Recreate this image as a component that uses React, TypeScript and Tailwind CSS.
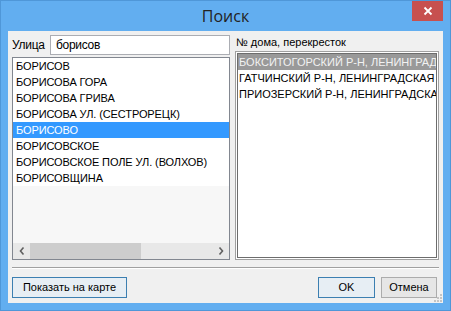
import React from "react";

const left = [
  "БОРИСОВ",
  "БОРИСОВА ГОРА",
  "БОРИСОВА ГРИВА",
  "БОРИСОВА УЛ. (СЕСТРОРЕЦК)",
  "БОРИСОВО",
  "БОРИСОВСКОЕ",
  "БОРИСОВСКОЕ ПОЛЕ УЛ. (ВОЛХОВ)",
  "БОРИСОВЩИНА",
];

const right = [
  "БОКСИТОГОРСКИЙ Р-Н, ЛЕНИНГРАДСКАЯ ОБЛ.",
  "ГАТЧИНСКИЙ Р-Н, ЛЕНИНГРАДСКАЯ ОБЛ.",
  "ПРИОЗЕРСКИЙ Р-Н, ЛЕНИНГРАДСКАЯ ОБЛ.",
];

export default function App() {
  return (
    <div
      className="relative w-[451px] h-[311px] overflow-hidden bg-[#62aef0] border border-[#4f97d8] flex flex-col text-[#000]"
      style={{ fontFamily: '"Liberation Sans", Arial, sans-serif' }}
    >
      <div className="h-[30px] flex items-center justify-center">
        <span
          className="text-[16px] text-[#222] mt-[-1px]"
          style={{ fontFamily: '"Open Sans", "Noto Sans", sans-serif' }}
        >
          Поиск
        </span>
      </div>
      <div className="absolute top-0 right-[7px] w-[31px] h-[20px] bg-[#c7504f] flex items-center justify-center">
        <svg width="10" height="10" viewBox="0 0 10 10">
          <path d="M1.5 1.5 L8.5 8.5 M8.5 1.5 L1.5 8.5" stroke="#fff" strokeWidth="1.8" />
        </svg>
      </div>
      <div className="relative mx-[7px] h-[272px] bg-[#f0f0f0] flex flex-col px-[4px] text-[11px]">
        <div className="flex gap-[5px] mt-[4px] h-[225px]">
          <div className="w-[218px] shrink-0 flex flex-col">
            <div className="flex items-center h-[20px]">
              <span className="w-[38px] text-[12px] tracking-[-0.3px]">Улица</span>
              <div className="flex-1 h-[20px] bg-white border border-[#abadb3] flex items-center pl-[5px] text-[12px] tracking-[-0.3px]">
                борисов
              </div>
            </div>
            <div className="mt-[2px] flex-1 border border-[#828790] bg-[#f7f7f7] flex flex-col">
              <div className="flex-1 flex flex-col overflow-hidden">
                {left.map((t, i) => (
                  <div
                    key={t}
                    className={
                      "h-[16px] leading-[16px] pl-[3px] whitespace-nowrap tracking-[-0.1px] " +
                      (i === 4 ? "bg-[#3399ff] text-white" : "bg-white")
                    }
                  >
                    {t}
                  </div>
                ))}
              </div>
              <div className="h-[16px] bg-[#e8e8e8] flex items-center">
                <div className="w-[17px] flex justify-center">
                  <svg width="6" height="8" viewBox="0 0 6 8">
                    <path d="M4.5 0.5 L1.5 4 L4.5 7.5" stroke="#606060" strokeWidth="1.6" fill="none" />
                  </svg>
                </div>
                <div className="w-[111px] h-[16px] bg-[#cdcdcd]" />
                <div className="flex-1" />
                <div className="w-[17px] flex justify-center">
                  <svg width="6" height="8" viewBox="0 0 6 8">
                    <path d="M1.5 0.5 L4.5 4 L1.5 7.5" stroke="#606060" strokeWidth="1.6" fill="none" />
                  </svg>
                </div>
              </div>
            </div>
          </div>
          <div className="flex-1 min-w-0 flex flex-col">
            <div className="h-[16px] leading-[14px] pl-[1px]">№ дома, перекресток</div>
            <div className="flex-1 min-w-0 border border-[#a0a0a0] p-[1px] bg-white">
              <div className="h-full border border-[#6d6d6d] bg-white overflow-hidden">
                {right.map((t, i) => (
                  <div
                    key={t}
                    className={
                      "h-[16px] leading-[16px] pl-[1px] whitespace-nowrap overflow-hidden " +
                      (i === 0 ? "bg-[#999999] text-[#f2f2f2]" : "")
                    }
                  >
                    {t}
                  </div>
                ))}
              </div>
            </div>
          </div>
        </div>
        <div className="mt-[7px] h-[2px] border-t border-[#a0a0a0] border-b border-b-white" />
        <div className="mt-[8px] flex items-center h-[21px] pr-[2px]">
          <div className="w-[115px] h-[21px] border border-[#3c7fb1] bg-[#e7eef4] flex items-center justify-center">
            Показать на карте
          </div>
          <div className="flex-1" />
          <div className="w-[57px] h-[21px] border border-[#3c7fb1] bg-[#e7eef4] flex items-center justify-center">
            OK
          </div>
          <div className="ml-[6px] w-[56px] h-[21px] border border-[#acacac] bg-[#e6e6e6] flex items-center justify-center">
            Отмена
          </div>
        </div>
        <svg className="absolute right-[1px] bottom-[1px]" width="10" height="10" viewBox="0 0 10 10">
          <rect x="8" y="2" width="2" height="2" fill="#c4c4c4" />
          <rect x="5" y="5" width="2" height="2" fill="#c4c4c4" />
          <rect x="8" y="5" width="2" height="2" fill="#c4c4c4" />
          <rect x="2" y="8" width="2" height="2" fill="#c4c4c4" />
          <rect x="5" y="8" width="2" height="2" fill="#c4c4c4" />
          <rect x="8" y="8" width="2" height="2" fill="#c4c4c4" />
        </svg>
      </div>
    </div>
  );
}
